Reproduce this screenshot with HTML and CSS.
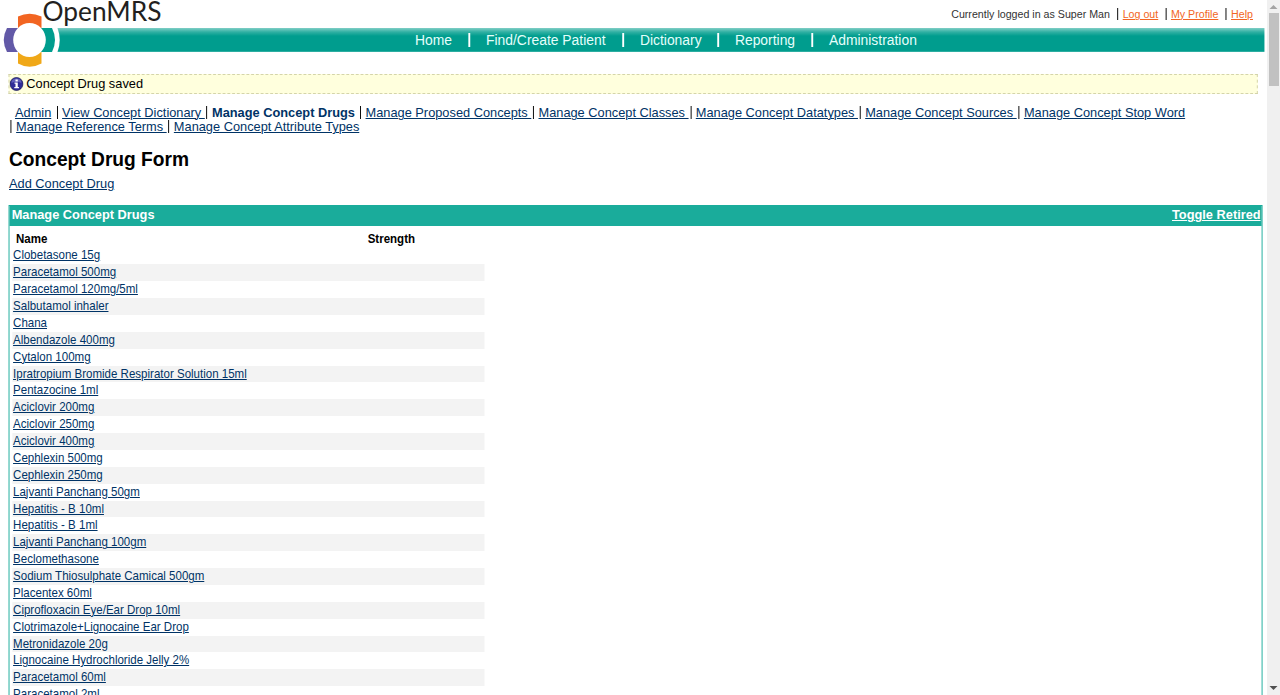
FILE: index.html
```html
<!DOCTYPE html>
<html lang="en">
<head>
<meta charset="utf-8">
<title>OpenMRS - Concept Drug Form</title>
<link rel="stylesheet" href="styles.css">
</head>
<body>
<div class="window">
<div class="page">
  <header class="header">
    <div class="user-bar">
      <span>Currently logged in as Super Man</span><span class="user-link"><a href="#">Log out</a></span><span class="user-link"><a href="#">My Profile</a></span><span class="user-link"><a href="#">Help</a></span>
    </div>
    <nav class="nav"><a class="home" href="#">Home</a><a class="find" href="#">Find/Create Patient</a><a class="dictionary" href="#">Dictionary</a><a class="reporting" href="#">Reporting</a><a class="administration" href="#">Administration</a></nav>
    <svg class="logo" viewBox="0 0 170 72" preserveAspectRatio="none">
      <path fill="#fff" d="M0 28H57.500Q62 40 57.500 52H0Z"/>
      <path fill="#f26522" d="M18 28V16.500Q29.500 11 41.500 16.500V28Z"/>
      <path fill="#f0a818" d="M18 51V63.500Q29.500 70 41.500 63.500V51Z"/>
      <path fill="#6259a7" d="M19 28H7Q.5 40 7 52H19Z"/>
      <path fill="#009d8e" d="M40 28H52Q58 40 52 52H40Z"/>
      <ellipse cx="29.500" cy="40" rx="16.300" ry="17" fill="#fff"/>
      <text x="42.500" y="21" textLength="119" lengthAdjust="spacingAndGlyphs" class="brand">OpenMRS</text>
    </svg>
  </header>
  <main class="content">
    <div class="message">
      <svg class="info" viewBox="0 0 14 14" preserveAspectRatio="none"><circle cx="7" cy="7" r="6.500" fill="#302d98" stroke="#17164f" stroke-width=".7"/><path d="M2 6Q2 1.500 7 1.500T12 6Q7 3.500 2 6" fill="#817fd0" opacity=".6"/><path d="M6 2.500h2.300v2H6zM5 5.500h3.300v4.500h1.200v1.300H4.800V10H6V6.800H5z" fill="#fff"/></svg>
      <span>Concept Drug saved</span>
    </div>
    <div class="menu">
      <div class="menu-row"><a class="first" href="#">Admin</a><a href="#">View Concept Dictionary&nbsp;</a><a class="active" href="#">Manage Concept Drugs</a><a href="#">Manage Proposed Concepts&nbsp;</a><a href="#">Manage Concept Classes&nbsp;</a><a href="#">Manage Concept Datatypes&nbsp;</a><a href="#">Manage Concept Sources&nbsp;</a><a href="#">Manage Concept Stop Word</a></div>
      <div class="menu-row second"><a href="#">Manage Reference Terms&nbsp;</a><a href="#">Manage Concept Attribute Types</a></div>
    </div>
    <h2 class="title">Concept Drug Form</h2>
    <a class="add" href="#">Add Concept Drug</a>
    <section class="panel">
      <div class="panel-head"><b>Manage Concept Drugs</b><a href="#">Toggle Retired</a></div>
      <div class="drugs">
        <div class="drug-head"><span>Name</span><span>Strength</span></div>
        <div class="drug"><a href="#">Clobetasone 15g</a></div>
        <div class="drug"><a href="#">Paracetamol 500mg</a></div>
        <div class="drug"><a href="#">Paracetamol 120mg/5ml</a></div>
        <div class="drug"><a href="#">Salbutamol inhaler</a></div>
        <div class="drug"><a href="#">Chana</a></div>
        <div class="drug"><a href="#">Albendazole 400mg</a></div>
        <div class="drug"><a href="#">Cytalon 100mg</a></div>
        <div class="drug"><a href="#">Ipratropium Bromide Respirator Solution 15ml</a></div>
        <div class="drug"><a href="#">Pentazocine 1ml</a></div>
        <div class="drug"><a href="#">Aciclovir 200mg</a></div>
        <div class="drug"><a href="#">Aciclovir 250mg</a></div>
        <div class="drug"><a href="#">Aciclovir 400mg</a></div>
        <div class="drug"><a href="#">Cephlexin 500mg</a></div>
        <div class="drug"><a href="#">Cephlexin 250mg</a></div>
        <div class="drug"><a href="#">Lajvanti Panchang 50gm</a></div>
        <div class="drug"><a href="#">Hepatitis - B 10ml</a></div>
        <div class="drug"><a href="#">Hepatitis - B 1ml</a></div>
        <div class="drug"><a href="#">Lajvanti Panchang 100gm</a></div>
        <div class="drug"><a href="#">Beclomethasone</a></div>
        <div class="drug"><a href="#">Sodium Thiosulphate Camical 500gm</a></div>
        <div class="drug"><a href="#">Placentex 60ml</a></div>
        <div class="drug"><a href="#">Ciprofloxacin Eye/Ear Drop 10ml</a></div>
        <div class="drug"><a href="#">Clotrimazole+Lignocaine Ear Drop</a></div>
        <div class="drug"><a href="#">Metronidazole 20g</a></div>
        <div class="drug"><a href="#">Lignocaine Hydrochloride Jelly 2%</a></div>
        <div class="drug"><a href="#">Paracetamol 60ml</a></div>
        <div class="drug"><a href="#">Paracetamol 2ml</a></div>
      </div>
    </section>
  </main>
</div>
<div class="scrollbar">
  <svg width="13" height="13" viewBox="0 0 13 13"><path d="M2.500 9L6.500 5L10.500 9Z" fill="#a3a3a3"/></svg>
  <div class="thumb"></div>
  <svg class="down" width="13" height="13" viewBox="0 0 13 13"><path d="M2.500 4L6.500 8L10.500 4Z" fill="#505050"/></svg>
</div>
</div>
</body>
</html>
```
FILE: styles.css
```css
* { box-sizing: border-box; }
body { margin: 0; background: #fff; color: #000; font: 13.47px/14.4px "Liberation Sans", Arial, sans-serif; overflow: hidden; }
a { color: #003366; text-underline-offset: 1px; text-decoration-thickness: 1px; }
.window { display: flex; justify-content: space-between; height: 695px; overflow: hidden; }
/* The page is laid out 1333px wide and condensed horizontally to 95%. */
.page { flex: none; width: 1333px; margin-right: -68px; transform: scaleX(0.95); transform-origin: 0 0; }
.header { position: relative; width: 1330.5px; height: 74px; }
.user-bar { display: flex; justify-content: flex-end; height: 28px; padding: 8px 11.6px 0 0; font-size: 11.23px; line-height: 13px; color: #333; white-space: nowrap; }
.user-link { height: 12px; margin-left: 7.7px; padding-left: 4.7px; border-left: 1px solid #000; }
.user-link a { color: #f26522; }
.nav { display: flex; height: 24px; padding: 5px 0 0 436.8px; background: linear-gradient(#80cec6 0, #30b0a3 4px, #009d8e 8px, #009d8e 23px, #58beb4 24px); font-size: 14.62px; line-height: 14px; white-space: nowrap; }
.nav a { height: 14px; color: #e5fffb; text-decoration: none; }
.nav a + a { padding-left: 16.9px; border-left: 2px solid #fff; }
.home { width: 55.9px; }
.find { width: 162px; }
.dictionary { width: 100px; }
.reporting { width: 99px; }
.logo { position: absolute; left: 0; top: 0; width: 178.95px; height: 72px; overflow: visible; }
.brand { font: 26.5px Lato, sans-serif; fill: #231f20; }
.content { padding-left: 9.47px; }
.message { display: flex; align-items: center; gap: 3.2px; width: 1314.7px; height: 20px; border: 1px dashed #d3d3a9; background: #ffffdd; }
.info { width: 14.7px; height: 14px; margin-left: -0.6px; }
.menu { margin-top: 12px; }
.menu-row { display: flex; height: 14.4px; white-space: nowrap; }
.menu-row a { margin-right: 1.8px; padding-left: 4.8px; height: 13px; border-left: 1px solid #000; }
.menu-row .first { padding-left: 6.3px; margin-right: 5.6px; border: 0; }
.menu-row .active { margin-right: 5.4px; color: #003366; font-weight: bold; text-decoration: none; }
.second { padding-left: 1.7px; }
.title { margin: 12px 0 0; font-size: 20.2px; line-height: 24px; }
.add { display: block; width: max-content; margin-top: 6px; }
.panel { width: 1320px; margin-top: 14.2px; border: 1px solid #1aac9b; }
.panel-head { display: flex; justify-content: space-between; height: 20px; padding: 2px 1.5px 0 1.8px; background: #1aac9b; color: #fff; font-weight: bold; }
.panel-head a { color: #fff; }
.drugs { width: 501px; padding: 4.2px 1px 0 2.2px; font-size: 12.13px; line-height: 16.88px; }
.drug-head { display: grid; grid-template-columns: 370.2px 1fr; padding-left: 4.2px; height: 16.88px; font-weight: bold; }
.drug { height: 16.88px; padding-left: 1.1px; white-space: nowrap; }
.drug:nth-child(odd) { background: #f3f3f3; }
.scrollbar { position: relative; display: flex; flex: none; flex-direction: column; align-items: center; width: 13px; background: #f0f0f0; }
.thumb { width: 10px; height: 73px; background: #c1c1c1; }
.down { margin-top: auto; }
```
